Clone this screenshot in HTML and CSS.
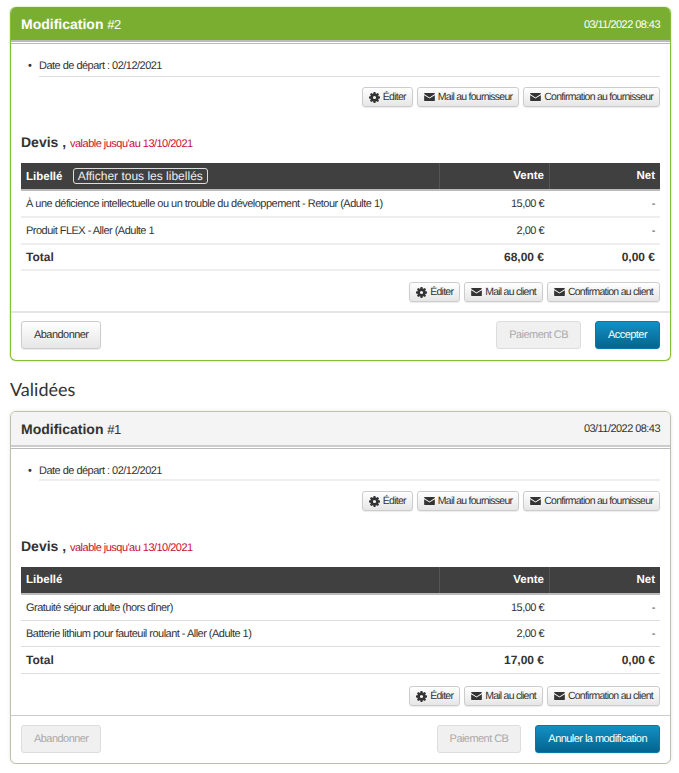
FILE: index.html
```html
<!DOCTYPE html>
<html lang="fr">
<head>
    <meta charset="UTF-8">
    <title>Modifications</title>
    <link rel="stylesheet" href="styles.css">
</head>
<body>
    <svg class="sprites" width="0" height="0">
        <symbol id="icon-cog" viewBox="0 0 24 24">
            <path fill-rule="evenodd" d="M10 0h4l.6 3.100 1.900.8 2.600-1.800 2.800 2.800-1.800 2.600.8 1.900L24 10v4l-3.100.6-.8 1.900 1.800 2.600-2.800 2.800-2.600-1.800-1.900.8L14 24h-4l-.6-3.100-1.900-.8-2.600 1.800-2.800-2.800 1.800-2.600-.8-1.900L0 14v-4l3.100-.6.8-1.900-1.800-2.600 2.800-2.800 2.600 1.800 1.900-.8zM12 8.500a3.500 3.500 0 1 0 0 7 3.500 3.500 0 0 0 0-7z"/>
        </symbol>
        <symbol id="icon-mail" viewBox="0 0 24 18">
            <path d="M1 0h22a1 1 0 0 1 1 1v1.500L12 10 0 2.500V1a1 1 0 0 1 1-1zM0 5l12 7.500L24 5v12a1 1 0 0 1-1 1H1a1 1 0 0 1-1-1z"/>
        </symbol>
    </svg>

    <section class="card card-active">
        <header class="card-head">
            <h2><b>Modification</b> <span>#2</span></h2>
            <span class="card-date">03/11/2022 08:43</span>
        </header>
        <div class="card-body">
            <ul class="details">
                <li>Date de départ : 02/12/2021</li>
            </ul>
            <div class="actions">
                <a class="btn"><svg class="ico-cog"><use href="#icon-cog"/></svg>Éditer</a>
                <a class="btn"><svg class="ico-mail"><use href="#icon-mail"/></svg>Mail au fournisseur</a>
                <a class="btn"><svg class="ico-mail"><use href="#icon-mail"/></svg>Confirmation au fournisseur</a>
            </div>
            <h3 class="quote"><b>Devis ,</b> <span>valable jusqu'au 13/10/2021</span></h3>
            <table>
                <thead>
                    <tr><th class="label-col">Libellé <a class="show-all">Afficher tous les libellés</a></th><th>Vente</th><th>Net</th></tr>
                </thead>
                <tbody>
                    <tr><td>À une déficience intellectuelle ou un trouble du développement - Retour (Adulte 1)</td><td>15,00 €</td><td>-</td></tr>
                    <tr><td>Produit FLEX - Aller (Adulte 1</td><td>2,00 €</td><td>-</td></tr>
                    <tr class="total"><td>Total</td><td>68,00 €</td><td>0,00 €</td></tr>
                </tbody>
            </table>
            <div class="actions actions-client">
                <a class="btn"><svg class="ico-cog"><use href="#icon-cog"/></svg>Éditer</a>
                <a class="btn"><svg class="ico-mail"><use href="#icon-mail"/></svg>Mail au client</a>
                <a class="btn"><svg class="ico-mail"><use href="#icon-mail"/></svg>Confirmation au client</a>
            </div>
        </div>
        <footer class="card-foot">
            <a class="btn btn-large">Abandonner</a>
            <div class="foot-right">
                <a class="btn btn-large disabled">Paiement CB</a>
                <a class="btn btn-large btn-primary">Accepter</a>
            </div>
        </footer>
    </section>

    <h2 class="section-title">Validées</h2>

    <section class="card">
        <header class="card-head">
            <h2><b>Modification</b> <span>#1</span></h2>
            <span class="card-date">03/11/2022 08:43</span>
        </header>
        <div class="card-body">
            <ul class="details">
                <li>Date de départ : 02/12/2021</li>
            </ul>
            <div class="actions">
                <a class="btn"><svg class="ico-cog"><use href="#icon-cog"/></svg>Éditer</a>
                <a class="btn"><svg class="ico-mail"><use href="#icon-mail"/></svg>Mail au fournisseur</a>
                <a class="btn"><svg class="ico-mail"><use href="#icon-mail"/></svg>Confirmation au fournisseur</a>
            </div>
            <h3 class="quote"><b>Devis ,</b> <span>valable jusqu'au 13/10/2021</span></h3>
            <table>
                <thead>
                    <tr><th class="label-col">Libellé</th><th>Vente</th><th>Net</th></tr>
                </thead>
                <tbody>
                    <tr><td>Gratuité séjour adulte (hors dîner)</td><td>15,00 €</td><td>-</td></tr>
                    <tr><td>Batterie lithium pour fauteuil roulant - Aller (Adulte 1)</td><td>2,00 €</td><td>-</td></tr>
                    <tr class="total"><td>Total</td><td>17,00 €</td><td>0,00 €</td></tr>
                </tbody>
            </table>
            <div class="actions actions-client">
                <a class="btn"><svg class="ico-cog"><use href="#icon-cog"/></svg>Éditer</a>
                <a class="btn"><svg class="ico-mail"><use href="#icon-mail"/></svg>Mail au client</a>
                <a class="btn"><svg class="ico-mail"><use href="#icon-mail"/></svg>Confirmation au client</a>
            </div>
        </div>
        <footer class="card-foot">
            <a class="btn btn-large disabled">Abandonner</a>
            <div class="foot-right">
                <a class="btn btn-large disabled">Paiement CB</a>
                <a class="btn btn-large btn-primary">Annuler la modification</a>
            </div>
        </footer>
    </section>
</body>
</html>
```

FILE: styles.css
```css
body {
    margin: 0;
    padding: 7px 8px 0 10px;
    background: #fff;
    color: #333;
    font-family: "Liberation Sans", Arial, sans-serif;
    font-size: 12px;
    line-height: 16px;
    text-rendering: geometricPrecision;
}
.sprites {
    display: block;
    height: 0;
}
.card {
    border: 1px solid #bcc0ad;
    border-radius: 6px;
    box-shadow: 0 0 3px rgba(150,170,110,0.3);
    background: #fff;
    overflow: hidden;
}
.card-active {
    border-color: #86bd3a;
    border-top: 0;
    box-shadow: 0 0 2px rgba(134,189,58,0.7);
}
.card-head {
    display: flex;
    justify-content: space-between;
    align-items: center;
    height: 32px;
    padding: 1px 10px 0;
    background: #f4f4f4;
    border-bottom: 2px solid #ccc;
    position: relative;
    margin-bottom: 3px;
}
.card-head::after {
    content: "";
    position: absolute;
    left: 0;
    right: 0;
    bottom: -4px;
    height: 1px;
    background: #bbb;
}
.card-head h2 {
    margin: 0;
    font-size: 14px;
    font-weight: normal;
}
.card-head h2 span {
    font-size: 13px;
    letter-spacing: -0.5px;
}
.card-date {
    font-size: 11px;
    letter-spacing: -0.55px;
}
.card-active .card-head {
    height: 31px;
    padding-top: 2px;
    background: #7aae30;
    border-bottom-color: #bbb;
    color: #fff;
}
.card-body {
    padding: 0 10px;
}
.details {
    margin: 0;
    padding: 13px 0 0 18px;
    list-style: none;
    font-size: 11px;
    letter-spacing: -0.52px;
}
.details li {
    position: relative;
    height: 16px;
    border-bottom: 2px solid #eee;
}
.card-active .details li {
    height: 18px;
    border-bottom: 1px solid #ddd;
}
.details li::before {
    content: "•";
    position: absolute;
    left: -11px;
}
.actions {
    display: flex;
    justify-content: flex-end;
    gap: 4px;
    margin-top: 10px;
}
.actions-client {
    margin-top: 12px;
}
.card-active .actions-client {
    margin-top: 11px;
}
.btn {
    display: inline-flex;
    align-items: center;
    height: 18px;
    padding: 0 6px;
    border: 1px solid #ccc;
    border-radius: 3px;
    background: linear-gradient(#fff, #e6e6e6);
    box-shadow: 0 1px 1px rgba(0,0,0,0.08);
    color: #333;
    font-size: 10.500px;
    letter-spacing: -0.75px;
    white-space: nowrap;
}
.btn svg {
    fill: #333;
    margin-right: 3px;
}
.ico-cog {
    width: 11px;
    height: 11px;
}
.ico-mail {
    width: 11px;
    height: 8px;
}
.quote {
    margin: 25px 0 9px;
    font-size: 14px;
    font-weight: normal;
    line-height: 20px;
}
.quote span {
    color: #c8102e;
    font-size: 11px;
    letter-spacing: -0.52px;
}
table {
    width: 100%;
    border-collapse: collapse;
    table-layout: fixed;
}
th {
    height: 26px;
    padding: 0 5px;
    background: #404040;
    border-bottom: 2px solid #bbb;
    color: #fff;
    font-size: 11.500px;
    text-align: right;
    width: 100px;
    box-shadow: inset 1px 0 0 #555;
}
th:last-child {
    width: 101px;
}
th.label-col {
    width: auto;
    text-align: left;
    box-shadow: none;
}
.show-all {
    display: inline-block;
    margin-left: 7px;
    padding: 0 4px;
    border: 1px solid #ddd;
    border-radius: 3px;
    color: #eee;
    font-weight: normal;
    line-height: 14px;
    font-size: 12px;
}
td {
    height: 25px;
    padding: 0 5px;
    border-bottom: 1px solid #ddd;
    font-size: 11px;
    letter-spacing: -0.52px;
    text-align: right;
}
.card-active td {
    border-bottom: 2px solid #eee;
}
td:first-child {
    text-align: left;
}
.total td {
    height: 26px;
    font-size: 12px;
    font-weight: bold;
    letter-spacing: 0;
}
.card-active .total td {
    height: 24px;
}
.card-foot {
    display: flex;
    justify-content: space-between;
    margin-top: 9px;
    padding: 9px 10px 10px;
    border-top: 1px solid #ccc;
}
.card-active .card-foot {
    margin-top: 9px;
    border-top: 2px solid #e4e4e4;
    padding-top: 8px;
    padding-bottom: 11px;
}
.foot-right {
    display: flex;
    gap: 14px;
}
.btn-large {
    height: 26px;
    padding: 0 12px;
    font-size: 11px;
    letter-spacing: -0.55px;
}
.btn.disabled {
    background: #f0f0f0;
    border-color: #ddd;
    color: #aaa;
    box-shadow: none;
}
.btn-primary {
    background: linear-gradient(#1390c4, #04648f);
    border-color: #0a77a8;
    color: #fff;
}
.section-title {
    margin: 17px 0 11px;
    font-family: Lato, sans-serif;
    font-size: 18px;
    font-weight: normal;
    line-height: 22px;
}
```
